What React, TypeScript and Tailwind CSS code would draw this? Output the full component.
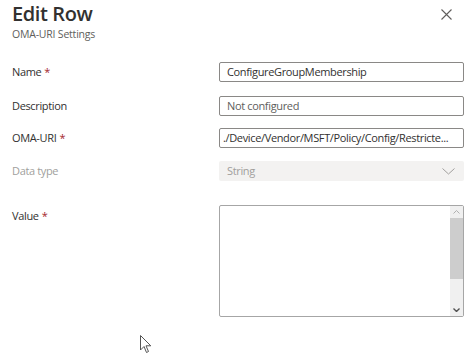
import React from "react";

function Req() {
  return <span className="text-[#a4262c] ml-[3px]">*</span>;
}

export default function App() {
  const font = { fontFamily: '"Open Sans", "Noto Sans", sans-serif' };
  return (
    <div className="relative w-[475px] h-[364px] bg-white overflow-hidden text-[#323130]" style={font}>
      <div className="flex justify-between pl-[12px] pr-[18px] pt-[0px]">
        <div className="flex flex-col">
          <div className="text-[20px] font-semibold leading-[28px] tracking-[-0.4px]">Edit Row</div>
          <div className="text-[10.5px] leading-[12px] text-[#605e5c] tracking-[-0.2px]">OMA-URI Settings</div>
        </div>
        <svg width="11" height="11" viewBox="0 0 11 11" className="mt-[9px] mr-[5px]">
          <path d="M0.5 0.5 L10.5 10.5 M10.5 0.5 L0.5 10.5" stroke="#605e5c" strokeWidth="1.1" />
        </svg>
      </div>

      <div className="flex flex-col pl-[12px] mt-[22px] text-[11px] tracking-[-0.35px]">
        <div className="flex items-center h-[20px]">
          <div className="w-[207px]">Name<Req /></div>
          <div className="w-[245px] h-[20px] border border-[#8a8886] rounded-[2px] px-[7px] flex items-center">ConfigureGroupMembership</div>
        </div>
        <div className="flex items-center h-[20px] mt-[14px]">
          <div className="w-[207px]">Description</div>
          <div className="w-[245px] h-[20px] border border-[#8a8886] rounded-[2px] px-[7px] flex items-center text-[#605e5c]">Not configured</div>
        </div>
        <div className="flex items-center h-[20px] mt-[12px]">
          <div className="w-[207px]">OMA-URI<Req /></div>
          <div className="w-[245px] h-[20px] border border-[#8a8886] rounded-[2px] px-[3px] flex items-center whitespace-nowrap overflow-hidden">./Device/Vendor/MSFT/Policy/Config/Restricte...</div>
        </div>
        <div className="flex items-center h-[20px] mt-[13px]">
          <div className="w-[207px] text-[#a19f9d]">Data type</div>
          <div className="w-[245px] h-[20px] bg-[#f3f2f1] rounded-[2px] px-[8px] flex items-center justify-between text-[#a19f9d]">
            <span>String</span>
            <svg width="13" height="7" viewBox="0 0 13 7" className="mr-[1px]">
              <path d="M0.5 0.5 L6.5 6 L12.5 0.5" fill="none" stroke="#a19f9d" strokeWidth="1" />
            </svg>
          </div>
        </div>
        <div className="flex items-start mt-[24px]">
          <div className="w-[207px] mt-[3px]">Value<Req /></div>
          <div className="w-[245px] h-[112px] border border-[#a6a6a6] rounded-[2px] flex justify-end">
            <div className="w-[13px] h-full bg-[#f0f0f0] flex flex-col items-center">
              <div className="h-[12px] flex items-center justify-center">
                <svg width="7" height="4" viewBox="0 0 7 4"><path d="M0.5 3.5 L3.5 0.5 L6.5 3.5" fill="none" stroke="#b0b0b0" strokeWidth="1" /></svg>
              </div>
              <div className="w-full h-[61px] bg-[#cdcdcd]" />
              <div className="flex-1" />
              <div className="h-[12px] flex items-center justify-center">
                <svg width="7" height="4" viewBox="0 0 7 4"><path d="M0.5 0.5 L3.5 3.5 L6.5 0.5" fill="none" stroke="#505050" strokeWidth="1.4" /></svg>
              </div>
            </div>
          </div>
        </div>
      </div>

      <svg width="12" height="19" viewBox="0 0 12 19" className="absolute left-[140px] top-[335px]">
        <path d="M0.5 0.5 L0.5 15 L4 11.5 L6.5 17.5 L8.5 16.5 L6 10.8 L10.8 10.8 Z" fill="white" stroke="#555" strokeWidth="1" strokeLinejoin="round" />
      </svg>
    </div>
  );
}
